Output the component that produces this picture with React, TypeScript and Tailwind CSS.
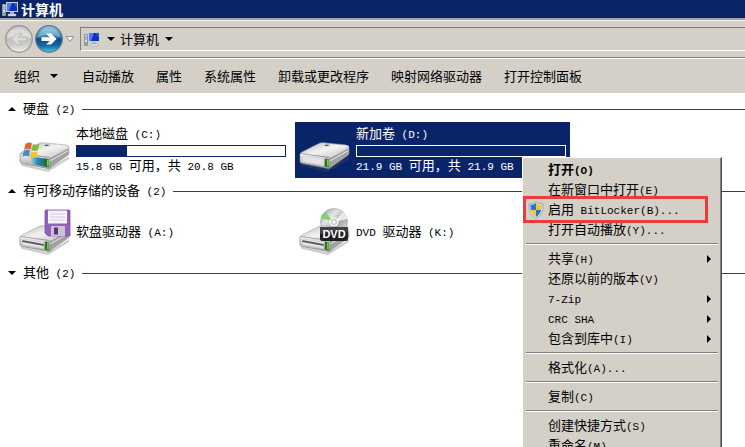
import { useId } from "react";
import type { ReactNode } from "react";

const TOOLS = ["自动播放", "属性", "系统属性", "卸载或更改程序", "映射网络驱动器", "打开控制面板"];

type MenuEntry = { label: string; bold?: boolean; sub?: boolean; shield?: boolean };

const MENU: MenuEntry[][] = [
  [
    { label: "打开(O)", bold: true },
    { label: "在新窗口中打开(E)" },
    { label: "启用 BitLocker(B)...", shield: true },
    { label: "打开自动播放(Y)..." },
  ],
  [
    { label: "共享(H)", sub: true },
    { label: "还原以前的版本(V)" },
    { label: "7-Zip", sub: true },
    { label: "CRC SHA", sub: true },
    { label: "包含到库中(I)", sub: true },
  ],
  [{ label: "格式化(A)..." }],
  [{ label: "复制(C)" }],
  [{ label: "创建快捷方式(S)" }, { label: "重命名(M)" }],
];

// Latin runs are set smaller, so that two of them fill one Chinese character.
function Label({ children }: { children: string }) {
  return (
    <>
      {children.split(/([\x20-\x7e]+)/).map((part, i) =>
        i % 2 ? (
          <span key={i} className="whitespace-pre font-['Liberation_Mono','Noto_Sans_CJK_SC',monospace] text-[11px] leading-4">
            {part}
          </span>
        ) : (
          part
        ),
      )}
    </>
  );
}

function Triangle({ dir = "down", className = "" }: { dir?: "down" | "up" | "right"; className?: string }) {
  const d = { down: "M0 2h8L4 6z", up: "M0 6h8L4 2z", right: "M2 0v8l4-4z" }[dir];
  return (
    <svg viewBox="0 0 8 8" className={`size-2 shrink-0 ${className}`} fill="currentColor" aria-hidden="true">
      <path d={d} />
    </svg>
  );
}

function ComputerIcon({ className = "" }: { className?: string }) {
  return (
    <svg viewBox="0 0 17 16" className={`shrink-0 ${className}`} aria-hidden="true">
      <path d="M0.5 3.5h3v11h-3z" fill="#d8dce2" stroke="#8d949e" />
      <path d="M1.5 6h1M1.5 8h1" stroke="#4b5563" />
      <path d="M1 12.5h2" stroke="#4fae4a" strokeWidth="2" />
      <path d="M4 1h12v10H4z" fill="#c5cfdd" />
      <path d="M5 2h10v8H5z" fill="#1230b8" />
      <path d="M5 2h5L7 10H5z" fill="#4b7cf0" />
      <path d="M11 2h4v5z" fill="#2b52dc" />
      <path d="M8 11h4v2H8z" fill="#a9b2c0" />
      <path d="M6 13h8v2H6z" fill="#dfe3ea" stroke="#98a1ae" strokeWidth="0.5" />
    </svg>
  );
}

function NavButton({ forward = false }: { forward?: boolean }) {
  const id = useId();
  return (
    <button type="button" aria-label={forward ? "前进" : "后退"} className="shrink-0">
      <svg viewBox="0 0 30 30" className="size-[30px]">
        <defs>
          <linearGradient id={id} x1="0" y1="0" x2="0" y2="1">
            <stop offset="0" stopColor={forward ? "#9cc8df" : "#c5c4c2"} />
            <stop offset="0.42" stopColor={forward ? "#3583b5" : "#d6d5d2"} />
            <stop offset="0.5" stopColor={forward ? "#0a4e8a" : "#c0bfbc"} />
            <stop offset="0.75" stopColor={forward ? "#1268a5" : "#d0cfcc"} />
            <stop offset="1" stopColor={forward ? "#52c6ee" : "#eeeeec"} />
          </linearGradient>
        </defs>
        <circle cx="15" cy="15" r="13.3" fill={`url(#${id})`} stroke={forward ? "#5a7890" : "#929292"} strokeWidth="1.2" />
        <path d="M4 13a11.2 10.5 0 0 1 22 0q-11-5-22 0z" fill="#fff" opacity={forward ? 0.25 : 0.3} />
        {forward ? (
          <path d="M7.5 13.2h8.2l-3.6-3.6h4.8l5.7 5.5-5.7 5.5h-4.8l3.6-3.7H7.5z" fill="#fff" />
        ) : (
          <path d="M22.5 13.2h-8.2l3.6-3.6h-4.8l-5.7 5.5 5.7 5.5h4.8l-3.6-3.7h8.2z" fill="#dddcda" stroke="#b7b6b4" strokeWidth="0.8" />
        )}
      </svg>
    </button>
  );
}

function DriveBody({ slot = false, teal = false }: { slot?: boolean; teal?: boolean }) {
  const id = useId();
  return (
    <g>
      <defs>
        <linearGradient id={`${id}t`} x1="0" y1="0" x2="1" y2="1">
          <stop offset="0" stopColor="#b9b9b9" />
          <stop offset="0.5" stopColor="#f2f2f2" />
          <stop offset="1" stopColor="#c2c2c2" />
        </linearGradient>
        <linearGradient id={`${id}f`} x1="0" y1="0" x2="0" y2="1">
          <stop offset="0" stopColor="#f6f6f6" />
          <stop offset="1" stopColor="#9c9c9c" />
        </linearGradient>
        <linearGradient id={`${id}g`} x1="0" y1="0" x2="1" y2="0">
          <stop offset="0" stopColor="#b7d9e8" />
          <stop offset="0.45" stopColor="#2f8cab" />
          <stop offset="1" stopColor="#245e6e" />
        </linearGradient>
      </defs>
      <path d="M1 29.5l27 6 22-13v2.500L29 38 3 32z" fill="#555" opacity="0.3" />
      <path d="M1 20.5Q1 19 3 18L20 9.5q2-1 4-.8l23 2.3q3 .3 3 2.5L31 23.5z" fill={`url(#${id}t)`} stroke="#a0a0a0" strokeWidth="0.6" />
      <path d="M30 23.5l19.5-10.5q.8.5.8 1.6v4.5q0 1.5-1.6 2.6L30.5 34.5z" fill="#a2a2a2" />
      <path d="M30.5 23.5L50 13.5M31 27l18.5-10.5" stroke="#e8e8e8" strokeWidth="1" />
      <path d="M1 20.5q0-1.2 1.5-1l27 4q1.5.2 1.5 1.5v8q0 2-2 1.6l-25.5-5Q1 29 1 27.5z" fill={`url(#${id}f)`} stroke="#858585" strokeWidth="0.7" />
      {teal ? (
        <path d="M11 22.2l16 2.5v8l-16-3z" fill={`url(#${id}g)`} />
      ) : (
        <path d="M3.5 21.8l21 3.3v6.6l-21-4z" fill="#e4e4e4" stroke="#c6c6c6" strokeWidth="0.5" />
      )}
      {slot && <path d="M4 24.2l20 3.6" stroke="#555" strokeWidth="1.8" strokeLinecap="round" />}
      <path d="M25.8 24.4l4 .6v8.2l-4-.8z" fill="#286f22" />
      <path d="M28 25.5l1.6.2v6.6l-1.6-.2z" fill="#72cf3d" />
      {!slot && <path d="M27 10.5l4 .4-2.3 1.2-3.700-.4z" fill="#555" />}
    </g>
  );
}

type DriveKind = "system" | "disk" | "floppy" | "dvd";

function DriveIcon({ kind }: { kind: DriveKind }) {
  const id = useId();
  const removable = kind === "floppy" || kind === "dvd";
  return (
    <svg viewBox="0 0 52 48" className="h-12 w-[52px] shrink-0" aria-hidden="true">
      {kind === "dvd" && (
        <g>
          <linearGradient id={id} x1="0" y1="0" x2="1" y2="1">
            <stop offset="0" stopColor="#8e8e8e" />
            <stop offset="0.35" stopColor="#e5e5e5" />
            <stop offset="0.6" stopColor="#a6a6a6" />
            <stop offset="1" stopColor="#ededed" />
          </linearGradient>
          <circle cx="35" cy="14" r="13.5" fill={`url(#${id})`} stroke="#9c9c9c" strokeWidth="0.6" />
          <path d="M35 14L22 10q1-4 4-6z" fill="#73d35b" opacity="0.8" />
          <path d="M35 14l9-10q4 3 4.5 7z" fill="#fff" opacity="0.7" />
          <circle cx="35" cy="14" r="4" fill="#c7d4dc" stroke="#fff" strokeWidth="1.2" />
          <circle cx="35" cy="14" r="1.6" fill="#fff" />
        </g>
      )}
      <g transform={removable ? "translate(0 9)" : "translate(0 8)"}>
        <DriveBody slot={removable} teal={kind === "system"} />
      </g>
      {kind === "system" && (
        <g transform="translate(4 15)">
          <path d="M2.5 3Q6 .5 9 2.5L7.5 8.5Q4 6.8 1 9z" fill="#e5632d" />
          <path d="M10 3q3 1.7 6.5-.2L15 9q-3.5 2-6.6 0z" fill="#80b843" />
          <path d="M.7 10q3.300-2.200 6.500-.3L5.700 15.500Q2.500 14-.8 16z" fill="#3f8fd0" />
          <path d="M8.200 10.200q3 1.800 6.500 0L13.200 16q-3.500 2-6.500.2z" fill="#f4c32f" />
        </g>
      )}
      {kind === "floppy" && (
        <g>
          <path d="M27 2h23q1 0 1 1v25H29l-3-3V3q0-1 1-1z" fill="#9560bd" stroke="#7945a0" strokeWidth="0.7" />
          <path d="M29 2.500h19v13H29z" fill="#f6f3fa" />
          <path d="M31 6h15M31 9h15M31 12h15" stroke="#cfc4dc" strokeWidth="0.8" />
          <path d="M32 18h14v10H32z" fill="#c9c4d1" />
          <path d="M35 19.500h4v7h-4z" fill="#5d2f83" />
        </g>
      )}
      {kind === "dvd" && (
        <g>
          <path d="M21 19h28v12q0 2-2 2H23q-2 0-2-2z" fill="#202020" />
          <path d="M21 19h28v5q-14-2-28 2z" fill="#fff" opacity="0.15" />
          <text x="35" y="30" textAnchor="middle" fill="#fff" className="font-['Liberation_Sans',sans-serif] text-[11px] font-bold">
            DVD
          </text>
        </g>
      )}
    </svg>
  );
}

function ShieldIcon() {
  const id = useId();
  return (
    <svg viewBox="0 0 16 18" className="h-[18px] w-4" aria-hidden="true">
      <clipPath id={id}>
        <path d="M8 2q2.500 1.800 5.500 2 .5 8.500-5.500 12-6-3.500-5.500-12Q5.500 3.800 8 2z" />
      </clipPath>
      <path d="M8 .6Q11 2.900 15 3q.8 10.500-7 14.500Q.2 13.500 1 3q4-.1 7-2.400z" fill="#d7e6f3" stroke="#7c94ab" strokeWidth="0.7" />
      <g clipPath={`url(#${id})`}>
        <path d="M0 0h8v9H0zM8 9h8v9H8z" fill="#2476ca" />
        <path d="M8 0h8v9H8zM0 9h8v9H0z" fill="#f5c52e" />
      </g>
    </svg>
  );
}

function GroupHeader({ title, collapsed = false }: { title: string; collapsed?: boolean }) {
  return (
    <button type="button" aria-expanded={!collapsed} className="flex h-[26px] w-full items-center pl-2">
      <Triangle dir={collapsed ? "down" : "up"} />
      <h2 className="ml-[7px]">
        <Label>{title}</Label>
      </h2>
      <span className="ml-[7px] h-px flex-1 bg-[#404040]" />
    </button>
  );
}

type DriveProps = { kind: DriveKind; name: string; detail?: string; used?: number; selected?: boolean };

function Drive({ kind, name, detail, used = 0, selected = false }: DriveProps) {
  return (
    <button
      type="button"
      className={`flex h-14 w-[275px] shrink-0 items-center gap-[5px] pr-1 pl-1 text-left ${selected ? "bg-[#0a246a] text-white" : ""}`}
    >
      <DriveIcon kind={kind} />
      <span className="flex flex-1 flex-col">
        <span>
          <Label>{name}</Label>
        </span>
        {detail && (
          <>
            <span className={`mt-0.5 h-3 border ${selected ? "border-white" : "border-[#0a246a]"}`}>
              <span className="block h-full bg-[#0a246a]" style={{ width: `${used}%` }} />
            </span>
            <span>
              <Label>{detail}</Label>
            </span>
          </>
        )}
      </span>
    </button>
  );
}

function MenuRow({ label, bold, sub, shield }: MenuEntry) {
  return (
    <button
      type="button"
      role="menuitem"
      className={`relative flex h-5 w-full items-center pr-[7px] text-left ${bold ? "font-bold" : ""}`}
    >
      <span className="flex w-6 justify-center">{shield && <ShieldIcon />}</span>
      <span className="flex-1">
        <Label>{label}</Label>
      </span>
      {sub && <Triangle dir="right" />}
      {shield && <span className="absolute -top-1 -left-px h-[27px] w-[185px] border-[3px] border-[#e93d3d]" />}
    </button>
  );
}

function ContextMenu() {
  return (
    <div
      role="menu"
      className="absolute top-[157px] left-[522px] w-[200px] border border-t-white border-r-[#505050] border-b-[#505050] border-l-white bg-[#d4d0c8] p-px pt-0.5 shadow-[inset_-1px_0_#808080]"
    >
      {MENU.map((group, i) => (
        <div key={i}>
          {i > 0 && <hr className="mx-0.5 mt-[3px] mb-1 h-0.5 border-t border-b border-t-[#808080] border-b-white" />}
          {group.map((entry) => (
            <MenuRow key={entry.label} {...entry} />
          ))}
        </div>
      ))}
    </div>
  );
}

function Bar({ className, children }: { className: string; children: ReactNode }) {
  return <div className={`flex items-center bg-[#d4d0c8] ${className}`}>{children}</div>;
}

export default function App() {
  return (
    <div className="relative h-screen overflow-hidden bg-white font-['Noto_Sans_CJK_SC',sans-serif] text-[13px] leading-4 whitespace-nowrap text-black">
      <header className="flex h-[18px] items-center bg-[#0a246a] pl-0.5 text-white">
        <ComputerIcon className="h-4 w-[17px]" />
        <h1 className="ml-0.5 text-sm leading-4 font-bold">计算机</h1>
      </header>

      <Bar className="h-10 border-t-2 border-b border-t-[#a5a39b] border-b-[#808080] pl-1 shadow-[inset_0_1px_#f5f4f0]">
        <NavButton />
        <NavButton forward />
        <button type="button" aria-label="最近的位置" className="ml-px">
          <svg viewBox="0 0 10 8" className="h-2 w-2.5">
            <path d="M1 1.500h8L5 6.500z" fill="#f5f5f5" stroke="#929292" />
          </svg>
        </button>
        <nav
          aria-label="地址"
          className="ml-[5px] flex h-6 flex-1 items-center border border-r-0 border-t-[#808080] border-b-white border-l-[#808080] pl-[3px]"
        >
          <ComputerIcon className="h-4 w-[17px]" />
          <Triangle className="mr-[5px] ml-1.5" />
          <button type="button">计算机</button>
          <Triangle className="ml-1.5" />
        </nav>
      </Bar>

      <Bar className="h-[35px] gap-[22px] border-t border-white pl-3.5">
        <button type="button" className="flex items-center gap-2.5">
          组织
          <Triangle className="mr-0.5" />
        </button>
        {TOOLS.map((tool) => (
          <button key={tool} type="button">
            {tool}
          </button>
        ))}
      </Bar>

      <main className="pt-[3px]">
        <section>
          <GroupHeader title="硬盘 (2)" />
          <div className="flex gap-[5px] pl-[15px]">
            <Drive kind="system" name="本地磁盘 (C:)" detail="15.8 GB 可用，共 20.8 GB" used={24} />
            <Drive kind="disk" name="新加卷 (D:)" detail="21.9 GB 可用，共 21.9 GB" selected />
          </div>
        </section>
        <section>
          <GroupHeader title="有可移动存储的设备 (2)" />
          <div className="flex gap-[5px] pl-[15px]">
            <Drive kind="floppy" name="软盘驱动器 (A:)" />
            <Drive kind="dvd" name="DVD 驱动器 (K:)" />
          </div>
        </section>
        <section>
          <GroupHeader title="其他 (2)" collapsed />
        </section>
      </main>

      <ContextMenu />
    </div>
  );
}
